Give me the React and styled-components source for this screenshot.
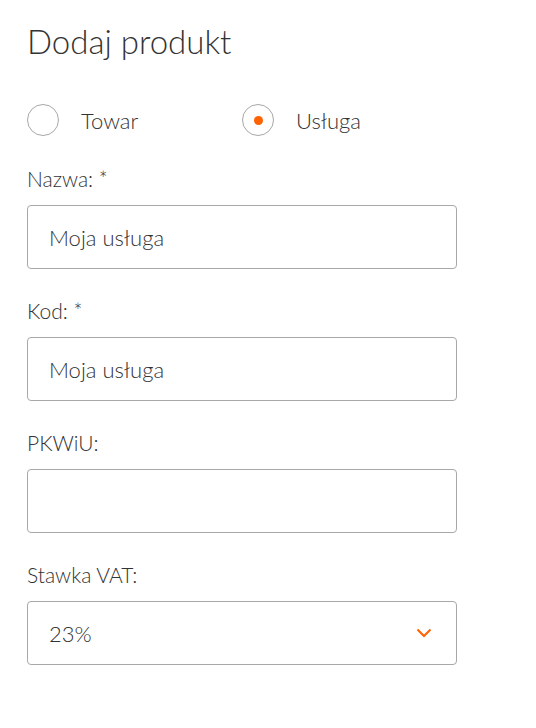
import React, { useState } from "react";
import styled, { createGlobalStyle } from "styled-components";

const GlobalStyle = createGlobalStyle`
    body {
        margin: 0;
        background: #ffffff;
        font-family: "Lato", "Open Sans", sans-serif;
        font-weight: 300;
        color: #333333;
    }
`;

const fields = [
    { label: "Nazwa: *", value: "Moja usługa" },
    { label: "Kod: *", value: "Moja usługa" },
    { label: "PKWiU:", value: "" },
];

const App = () => {
    const [kind, setKind] = useState("usluga");

    return (
        <React.Fragment>
            <GlobalStyle />
            <Page>
                <Title>Dodaj produkt</Title>
                <RadioRow>
                    <RadioOption onClick={() => setKind("towar")}>
                        <RadioCircle $checked={kind === "towar"} />
                        <span>Towar</span>
                    </RadioOption>
                    <RadioOption onClick={() => setKind("usluga")}>
                        <RadioCircle $checked={kind === "usluga"} />
                        <span>Usługa</span>
                    </RadioOption>
                </RadioRow>
                {fields.map((f) => (
                    <Field key={f.label}>
                        <Label>{f.label}</Label>
                        <Input defaultValue={f.value} />
                    </Field>
                ))}
                <Field>
                    <Label>Stawka VAT:</Label>
                    <SelectBox>
                        <span>23%</span>
                        <svg width="16" height="10" viewBox="0 0 16 10">
                            <path d="M1.5 1.5 L8 8 L14.5 1.5" fill="none" stroke="#ff6200" strokeWidth="2" />
                        </svg>
                    </SelectBox>
                </Field>
            </Page>
        </React.Fragment>
    );
};

export default App;

const Page = styled.div`
    padding: 21px 27px 40px;
    width: 430px;
`;

const Title = styled.h1`
    margin: 0;
    font-size: 33px;
    font-weight: 300;
    line-height: 40px;
    color: #333333;
`;

const RadioRow = styled.div`
    display: flex;
    margin-top: 41px;
    height: 36px;
    align-items: center;
`;

const RadioOption = styled.label`
    display: flex;
    align-items: center;
    width: 215px;
    font-size: 22px;
    color: #333333;
    cursor: pointer;
    & > span {
        margin-left: 22px;
    }
`;

const RadioCircle = styled.div`
    width: 32px;
    height: 32px;
    border-radius: 50%;
    border: 1px solid #a8a8a8;
    box-sizing: border-box;
    display: flex;
    align-items: center;
    justify-content: center;
    &::after {
        content: "";
        display: ${(p) => (p.$checked ? "block" : "none")};
        width: 9px;
        height: 9px;
        border-radius: 50%;
        background: #ff6200;
    }
`;

const Field = styled.div`
    margin-top: 28px;
    & + & {
        margin-top: 29px;
    }
`;

const Label = styled.div`
    font-size: 21px;
    line-height: 26px;
    color: #333333;
    margin-bottom: 13px;
`;

const Input = styled.input`
    display: block;
    width: 430px;
    height: 64px;
    box-sizing: border-box;
    border: 1px solid #a8a8a8;
    border-radius: 4px;
    padding: 0 21px;
    font-family: "Lato", "Open Sans", sans-serif;
    font-weight: 300;
    font-size: 22px;
    color: #333333;
    outline: none;
`;

const SelectBox = styled.div`
    display: flex;
    align-items: center;
    justify-content: space-between;
    width: 430px;
    height: 64px;
    box-sizing: border-box;
    border: 1px solid #a8a8a8;
    border-radius: 4px;
    padding: 0 24px 0 21px;
    font-size: 22px;
    color: #333333;
`;
